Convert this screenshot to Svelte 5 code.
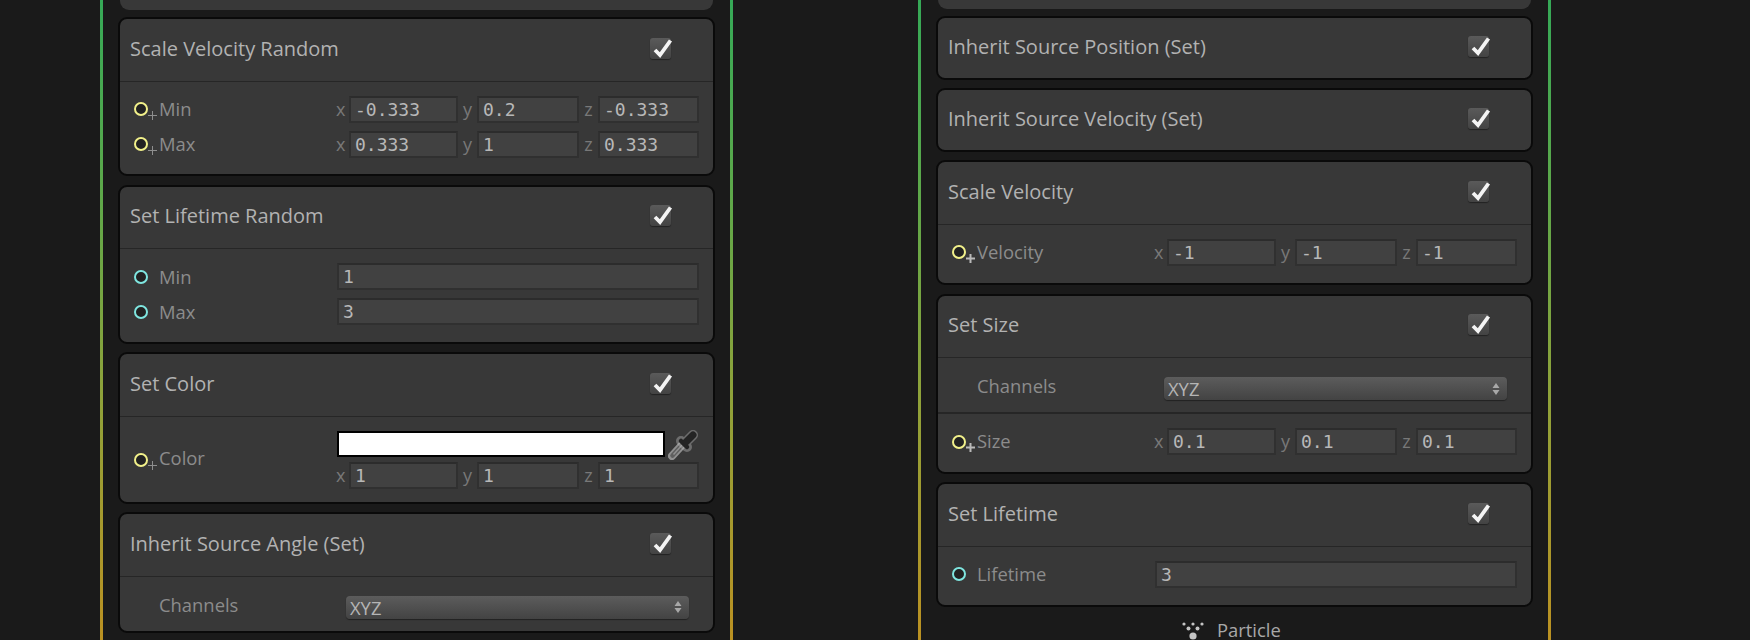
<script>
  const left = [
    { stub: 9.5 },
    { title: 'Scale Velocity Random', rows: [
      { pin: 'v', label: 'Min', xyz: ['-0.333', '0.2', '-0.333'] },
      { pin: 'v', label: 'Max', xyz: ['0.333', '1', '0.333'] }
    ] },
    { title: 'Set Lifetime Random', rows: [
      { pin: 'f', label: 'Min', value: '1' },
      { pin: 'f', label: 'Max', value: '3' }
    ] },
    { title: 'Set Color', rows: [ { pin: 'v', label: 'Color', color: true, xyz: ['1', '1', '1'] } ] },
    { title: 'Inherit Source Angle (Set)', rows: [ { label: 'Channels', select: 'XYZ' } ] }
  ];
  const right = [
    { stub: 8.5 },
    { title: 'Inherit Source Position (Set)', rows: [] },
    { title: 'Inherit Source Velocity (Set)', rows: [] },
    { title: 'Scale Velocity', rows: [ { pin: 'v', bold: true, label: 'Velocity', xyz: ['-1', '-1', '-1'] } ] },
    { title: 'Set Size', rows: [
      { label: 'Channels', select: 'XYZ' },
      { pin: 'v', bold: true, label: 'Size', xyz: ['0.1', '0.1', '0.1'] }
    ] },
    { title: 'Set Lifetime', rows: [ { pin: 'f', roomy: true, label: 'Lifetime', value: '3' } ] }
  ];
</script>

{#snippet xyz(vals)}
  <div class="xyz">
    <span class="axis ax0">x</span><span class="input">{vals[0]}</span>
    <span class="axis">y</span><span class="input">{vals[1]}</span>
    <span class="axis">z</span><span class="input">{vals[2]}</span>
  </div>
{/snippet}

{#snippet card(c)}
  {#if c.stub}
    <div class="card stub" style:height="{c.stub}px"></div>
  {:else}
    <section class="card">
      <header class="head">
        <h3>{c.title}</h3>
        <span class="check">
          <svg viewBox="0 0 22 22" width="22" height="22"><path d="M5 12 L10 17 L20.5 2.5" fill="none" stroke="#f4f4f4" stroke-width="3.8"/></svg>
        </span>
      </header>
      {#each c.rows as r}
        <div class="row" class:sel={r.select} class:col={r.color} class:wide={r.value} class:roomy={r.bold || r.roomy}>
          <span class="slot">
            {#if r.pin}
              <span class="pin {r.pin}"></span>
              {#if r.pin === 'v'}
                <svg class="plus" viewBox="0 0 9 9" width="9" height="9"><path d="M0 4.5H9M4.5 0V9" stroke={r.bold ? '#b9b9b9' : '#8e8e8e'} stroke-width={r.bold ? 2 : 1}/></svg>
              {/if}
            {/if}
          </span>
          <span class="label">{r.label}</span>
          {#if r.select}
            <div class="select">
              <span>{r.select}</span>
              <svg viewBox="0 0 8 14" width="8" height="14"><path d="M4 1 7.5 6H0.5ZM4 13 0.5 8H7.5Z" fill="#a8a8a8"/></svg>
            </div>
          {:else if r.color}
            <div class="stack">
              <div class="swatchrow">
                <div class="swatch"></div>
                <svg class="dropper" viewBox="0 0 34 34" width="34" height="34">
                  <path d="M6 29 L17 17" stroke="#d8d8d8" stroke-width="8" stroke-linecap="round" opacity=".55"/>
                  <path d="M6.5 28.5 L17 17" stroke="#5f5f5f" stroke-width="4.5" stroke-linecap="round"/>
                  <path d="M7.5 27.5 L16 18" stroke="#909090" stroke-width="1.5"/>
                  <path d="M15 14 L21 20M22 13 L27 8" stroke="#bdbdbd" stroke-width="10" stroke-linecap="round" opacity=".4"/>
                  <path d="M15 14 L21 20" stroke="#242424" stroke-width="4.5" stroke-linecap="round"/>
                  <path d="M20 15 L27 8" stroke="#242424" stroke-width="7" stroke-linecap="round"/>
                </svg>
              </div>
              {@render xyz(r.xyz)}
            </div>
          {:else if r.xyz}
            {@render xyz(r.xyz)}
          {:else}
            <span class="input full">{r.value}</span>
          {/if}
        </div>
      {/each}
    </section>
  {/if}
{/snippet}

<main class="page">
  <div class="graph">
    {#each left as c}{@render card(c)}{/each}
  </div>
  <div class="graph">
    {#each right as c}{@render card(c)}{/each}
    <div class="node">
      <svg viewBox="0 0 22 18" width="22" height="18">
        <g fill="#c4c4c4">
          <circle cx="2" cy="2" r="1.6"/><circle cx="11" cy="2" r="1.6"/><circle cx="20" cy="2" r="1.6"/>
          <circle cx="6.5" cy="6.5" r="2"/><circle cx="15.5" cy="6.5" r="2"/>
          <circle cx="11" cy="14" r="3.6"/>
        </g>
      </svg>
      <span>Particle</span>
    </div>
  </div>
</main>

<style>
  :global(body) { margin: 0; background: #1a1a1a; }
  .page {
    display: flex;
    gap: 185px;
    padding-left: 100px;
    height: 640px;
    overflow: hidden;
    background: #1a1a1a;
    font-family: "Open Sans", "Noto Sans", sans-serif;
  }
  .graph {
    width: 633px;
    box-sizing: border-box;
    height: 640px;
    padding: 0 15px;
    border-left: 3px solid;
    border-right: 3px solid;
    border-image: linear-gradient(#35a957 0%, #5da84a 30%, #8fa23a 62%, #bb9122 100%) 1;
    display: flex;
    flex-direction: column;
    gap: 8.5px;
  }
  .card {
    background: #383838;
    border: 2px solid #0a0a0a;
    border-radius: 9px;
    box-sizing: border-box;
    flex: none;
  }
  .stub {
    border: 0;
    border-radius: 0 0 9px 9px;
    margin: 0 2px -1px;
  }
  .head {
    height: 61.5px;
    box-sizing: border-box;
    padding: 0 42.5px 3.5px 10px;
    display: flex;
    align-items: center;
    justify-content: space-between;
  }
  .head:last-child { height: 59.5px; }
  h3 {
    margin: 0;
    font-size: 20px;
    font-weight: 400;
    color: #b2b2b2;
  }
  .check {
    width: 21px;
    height: 21px;
    box-sizing: border-box;
    border-radius: 3px;
    background: linear-gradient(#5a5a5a, #434343);
    box-shadow: 0 1px 1px #222;
    display: block;
    position: relative;
  }
  .check svg { position: absolute; left: 0; top: 0; overflow: visible; }
  .row {
    border-top: 1px solid #262626;
    display: flex;
    align-items: center;
    padding: 14px 15px 16.5px 10px;
  }
  .row.roomy { padding-bottom: 17.5px; }
  .row + .row { border-top: 0; padding-top: 8px; }
  .row:has(+ .row:not(.sel)):not(.sel) { padding-bottom: 0; }
  .row.col { padding-bottom: 13px; }
  .row.sel {
    height: 55px;
    box-sizing: border-box;
    padding: 19px 15px 0 10px;
    align-items: flex-start;
  }
  .row.sel .label { margin-top: -4px; }
  .row.sel + .row {
    border-top: 2px solid #262626;
    padding-top: 14px;
    padding-bottom: 16.5px;
  }
  .slot {
    width: 29px;
    height: 24px;
    flex: none;
    position: relative;
  }
  .pin {
    position: absolute;
    left: 4px;
    top: 5px;
    box-sizing: border-box;
    width: 14px;
    height: 14px;
    border-radius: 50%;
    border: 2px solid;
    background: #222;
  }
  .pin.v { border-color: #f1f08a; }
  .pin.f { border-color: #7fe6e0; }
  .plus { position: absolute; left: 17.5px; top: 13.5px; }
  .label {
    width: 177px;
    flex: none;
    margin-top: -2px;
    font-size: 18.4px;
    color: #8c8c8c;
  }
  .wide .label { margin-top: -1px; }
  .row.col .label { margin-top: -5px; }
  .row.sel .label { width: 187px; }
  .xyz {
    display: grid;
    grid-template-columns: 13px 109px 19px 102px 19px 101px;
    font-size: 18px;
  }
  .axis {
    color: #787878;
    text-align: center;
    font-family: "Open Sans", sans-serif;
    line-height: 27px;
  }
  .ax0 { text-align: left; }
  .input {
    box-sizing: border-box;
    height: 27px;
    padding-left: 4px;
    background: #414141;
    border: 2px solid #303030;
    border-top-color: #2c2c2c;
    font-family: "DejaVu Sans Mono", monospace;
    font-size: 18px;
    line-height: 24px;
    color: #b8b8b8;
  }
  .full { width: 362px; flex: none; margin-left: 1px; }
  .select {
    width: 343px;
    height: 23px;
    box-sizing: border-box;
    border-radius: 4px;
    padding: 0 7px 0 4px;
    background: linear-gradient(#5c5c5c, #434343);
    box-shadow: 0 1px 1px #222;
    display: flex;
    align-items: center;
    justify-content: space-between;
    font-size: 18.4px;
    color: #b5b5b5;
  }
  .stack { display: flex; flex-direction: column; gap: 5px; }
  .swatchrow { display: flex; align-items: center; height: 26px; }
  .swatch {
    box-sizing: border-box;
    width: 328px;
    height: 26px;
    margin-left: 1px;
    background: #fff;
    border: 2px solid #000;
  }
  .dropper { flex: none; margin-left: 1px; }
  .node {
    display: flex;
    align-items: flex-start;
    gap: 13px;
    height: 16px;
    padding-left: 246px;
    margin-top: 6.5px;
    font-size: 18.4px;
    line-height: 16px;
    color: #a8a8a8;
  }
</style>
